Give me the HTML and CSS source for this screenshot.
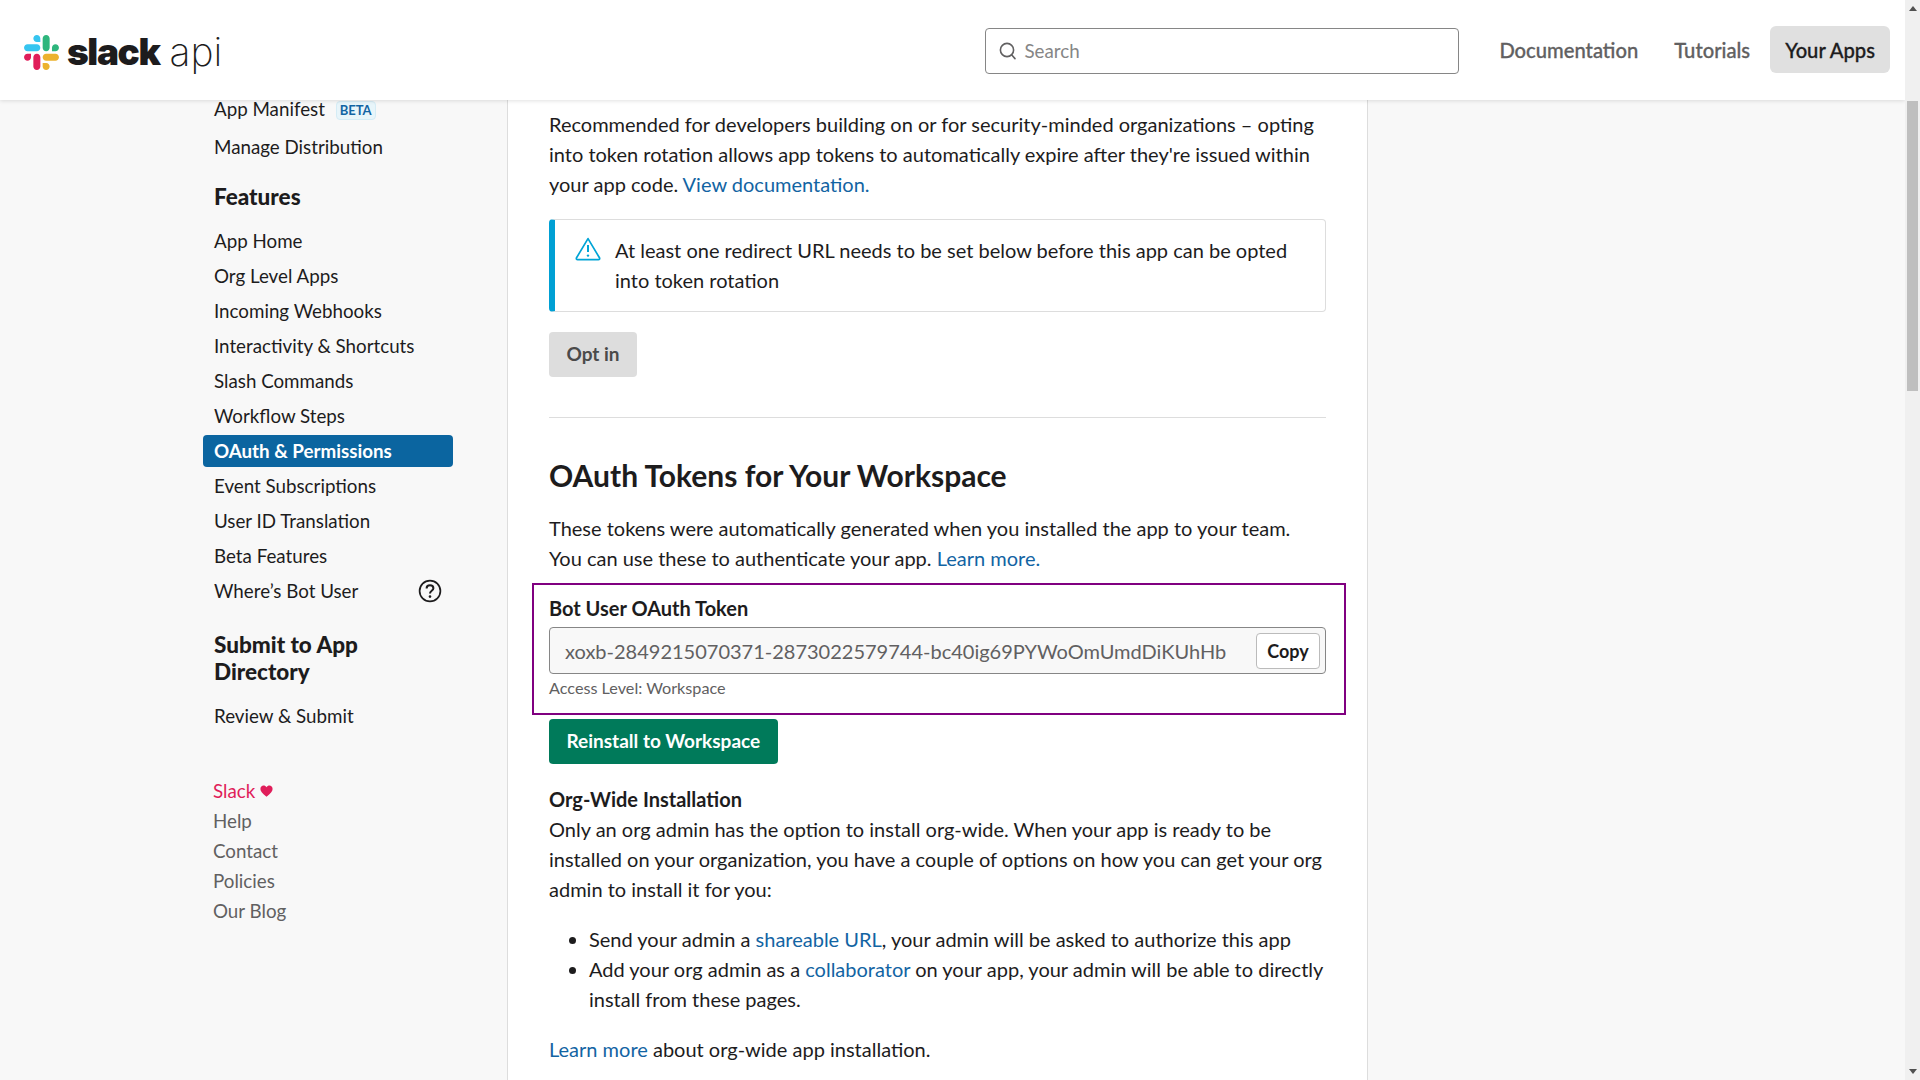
FILE: index.html
```html
<!DOCTYPE html>
<html lang="en">
<head>
    <meta charset="UTF-8" />
    <title>Slack API: OAuth &amp; Permissions</title>
    <link rel="stylesheet" href="styles.css">
</head>
<body>
    <div class="page">
        <header class="topbar">
            <a class="logo" href="#">
                <svg class="logo-mark" viewBox="0 0 2447.6 2452.5" aria-hidden="true">
                    <path d="m897.4 0c-135.3.1-244.8 109.9-244.7 245.2-.1 135.3 109.5 245.1 244.8 245.2h244.8v-245.1c.1-135.3-109.5-245.1-244.9-245.3.1 0 .1 0 0 0m0 654h-652.6c-135.3.1-244.9 109.9-244.8 245.2-.2 135.3 109.4 245.1 244.7 245.3h652.7c135.3-.1 244.9-109.9 244.8-245.2.1-135.4-109.5-245.2-244.8-245.3z" fill="#36c5f0"/>
                    <path d="m2447.6 899.2c.1-135.3-109.5-245.1-244.8-245.2-135.3.1-244.9 109.9-244.8 245.2v245.3h244.8c135.3-.1 244.9-109.9 244.8-245.3zm-652.7 0v-654c.1-135.2-109.4-245-244.7-245.2-135.3.1-244.9 109.9-244.8 245.2v654c-.2 135.3 109.4 245.1 244.7 245.3 135.3-.1 244.9-109.9 244.8-245.3z" fill="#2eb67d"/>
                    <path d="m1550.1 2452.5c135.3-.1 244.9-109.9 244.8-245.2.1-135.3-109.5-245.1-244.8-245.2h-244.8v245.2c-.1 135.2 109.5 245 244.8 245.2zm0-654.1h652.7c135.3-.1 244.9-109.9 244.8-245.2.2-135.3-109.4-245.1-244.7-245.3h-652.7c-135.3.1-244.9 109.9-244.8 245.2-.1 135.4 109.4 245.2 244.7 245.3z" fill="#ecb22e"/>
                    <path d="m0 1553.2c-.1 135.3 109.5 245.1 244.8 245.2 135.3-.1 244.9-109.9 244.8-245.2v-245.2h-244.8c-135.3.1-244.9 109.9-244.8 245.2zm652.7 0v654c-.2 135.3 109.4 245.1 244.7 245.3 135.3-.1 244.9-109.9 244.8-245.2v-653.9c.2-135.3-109.4-245.1-244.7-245.3-135.4 0-244.9 109.8-244.8 245.1 0 0 0 .1 0 .1z" fill="#e01e5a"/>
                </svg>
                <span class="logo-slack">slack</span>
                <span class="logo-api">api</span>
            </a>
            <div class="search">
                <svg class="search-icon" viewBox="0 0 20 20" aria-hidden="true">
                    <circle cx="9" cy="9" r="6.6" fill="none" stroke="#616061" stroke-width="1.6"/>
                    <path d="M13.6 13.8 L17 17.6" fill="none" stroke="#616061" stroke-width="1.6" stroke-linecap="round"/>
                </svg>
                <span class="search-text">Search</span>
            </div>
            <nav class="topnav">
                <a href="#">Documentation</a>
                <a href="#">Tutorials</a>
                <a href="#" class="topnav-active">Your Apps</a>
            </nav>
        </header>

        <div class="columns">
            <aside class="sidebar">
                <ul class="side-list side-list-top">
                    <li class="side-tall">App Manifest <span class="beta">BETA</span></li>
                    <li class="side-tall">Manage Distribution</li>
                </ul>
                <h3 class="side-title">Features</h3>
                <ul class="side-list">
                    <li>App Home</li>
                    <li>Org Level Apps</li>
                    <li>Incoming Webhooks</li>
                    <li>Interactivity &amp; Shortcuts</li>
                    <li>Slash Commands</li>
                    <li>Workflow Steps</li>
                    <li class="side-active">OAuth &amp; Permissions</li>
                    <li>Event Subscriptions</li>
                    <li>User ID Translation</li>
                    <li>Beta Features</li>
                    <li class="side-help">Where’s Bot User
                        <svg class="help-icon" viewBox="0 0 24 24" aria-hidden="true">
                            <circle cx="12" cy="12" r="10.4" fill="none" stroke="#1d1c1d" stroke-width="1.7"/>
                            <path d="M8.6 9.4c0-2 1.5-3.2 3.4-3.2s3.4 1.2 3.4 3c0 2.6-3.4 2.6-3.4 5.2" fill="none" stroke="#1d1c1d" stroke-width="2"/>
                            <circle cx="12" cy="17.6" r="1.3" fill="#1d1c1d"/>
                        </svg>
                    </li>
                </ul>
                <h3 class="side-title side-title-two">Submit to App Directory</h3>
                <ul class="side-list">
                    <li>Review &amp; Submit</li>
                </ul>
                <ul class="side-foot">
                    <li class="foot-love">Slack
                        <svg class="heart" viewBox="0 0 14 13" aria-hidden="true">
                            <path d="M7 12.6 C2.6 9 .4 7 .4 4.2 C.4 2 2 .6 3.8 .6 C5.1 .6 6.3 1.3 7 2.5 C7.7 1.3 8.9 .6 10.2 .6 C12 .6 13.6 2 13.6 4.2 C13.6 7 11.4 9 7 12.6 Z" fill="#e01e5a"/>
                        </svg>
                    </li>
                    <li>Help</li>
                    <li>Contact</li>
                    <li>Policies</li>
                    <li>Our Blog</li>
                </ul>
            </aside>

            <main class="content">
                <p>Recommended for developers building on or for security-minded organizations – opting into token rotation allows app tokens to automatically expire after they're issued within your app code. <a href="#">View documentation.</a></p>

                <div class="callout">
                    <svg class="callout-icon" viewBox="0 0 26 24" aria-hidden="true">
                        <path d="M13 1.6 L24.6 21 Q25 22.6 23.4 22.6 L2.6 22.6 Q1 22.6 1.4 21 Z" fill="none" stroke="#00a4d6" stroke-width="1.7" stroke-linejoin="round"/>
                        <path d="M13 8 V15" fill="none" stroke="#00a4d6" stroke-width="2"/>
                        <circle cx="13" cy="18.6" r="1.2" fill="#00a4d6"/>
                    </svg>
                    <span>At least one redirect URL needs to be set below before this app can be opted into token rotation</span>
                </div>

                <button class="btn btn-grey" type="button">Opt in</button>

                <hr class="divider">

                <h2 class="section-title">OAuth Tokens for Your Workspace</h2>
                <p>These tokens were automatically generated when you installed the app to your team. You can use these to authenticate your app. <a href="#">Learn more.</a></p>

                <div class="token-box">
                    <label class="token-label">Bot User OAuth Token</label>
                    <div class="token-field">
                        <span class="token-value">xoxb-2849215070371-2873022579744-bc40ig69PYWoOmUmdDiKUhHb</span>
                        <button class="copy-btn" type="button">Copy</button>
                    </div>
                    <div class="token-note">Access Level: Workspace</div>
                </div>

                <button class="btn btn-green" type="button">Reinstall to Workspace</button>

                <h4 class="org-title">Org-Wide Installation</h4>
                <p>Only an org admin has the option to install org-wide. When your app is ready to be installed on your organization, you have a couple of options on how you can get your org admin to install it for you:</p>
                <ul class="org-list">
                    <li>Send your admin a <a href="#">shareable URL</a>, your admin will be asked to authorize this app</li>
                    <li>Add your org admin as a <a href="#">collaborator</a> on your app, your admin will be able to directly install from these pages.</li>
                </ul>
                <p><a href="#">Learn more</a> about org-wide app installation.</p>
            </main>

            <div class="rightbar"></div>
        </div>
    </div>

    <div class="scrollbar">
        <span class="arrow arrow-up"></span>
        <span class="thumb"></span>
        <span class="arrow arrow-down"></span>
    </div>
</body>
</html>
```

FILE: styles.css
```css
* {
    margin: 0;
    padding: 0;
    box-sizing: border-box;
}

html, body {
    height: 100%;
    overflow: hidden;
}

body {
    display: flex;
    font-family: Lato, "Open Sans", sans-serif;
    font-size: 20px;
    line-height: 30px;
    color: #1d1c1d;
    background: #f8f8f8;
}

a {
    color: #1264a3;
    text-decoration: none;
}

ul {
    list-style: none;
}

.page {
    flex: 1;
    min-width: 0;
    height: 1080px;
    display: flex;
    flex-direction: column;
    overflow: hidden;
}

/* header */
.topbar {
    position: relative;
    z-index: 2;
    flex: none;
    height: 100px;
    display: flex;
    align-items: center;
    background: #fff;
    box-shadow: 0 1px 4px rgba(0, 0, 0, 0.12);
    padding: 0 15px 0 24px;
}

.logo {
    display: flex;
    align-items: center;
    color: #1d1c1d;
    margin-top: 4px;
}

.logo-mark {
    width: 35px;
    height: 35px;
    margin-right: 8px;
}

.logo-slack {
    font-family: Inter, sans-serif;
    font-size: 37px;
    line-height: 46px;
    font-weight: 900;
    letter-spacing: -1.4px;
    margin-right: 10px;
}

.logo-api {
    font-family: Inter, sans-serif;
    font-size: 39px;
    line-height: 46px;
    font-weight: 200;
}

.search {
    margin-left: auto;
    width: 474px;
    height: 46px;
    display: flex;
    align-items: center;
    gap: 6px;
    border: 1px solid #868686;
    border-radius: 4px;
    padding: 0 12px;
    color: #868686;
    font-size: 18.75px;
    margin-top: 1px;
}

.search-icon {
    width: 20px;
    height: 20px;
}

.topnav {
    display: flex;
    align-items: center;
    margin-left: 25px;
}

.topnav a {
    color: #616061;
    font-size: 20.2px;
    font-weight: 500;
    -webkit-text-stroke: 0.3px;
    padding: 0 15px;
    height: 47px;
    line-height: 49px;
    border-radius: 6px;
    margin-top: -1px;
}

.topnav a + a {
    margin-left: 6px;
}

.topnav .topnav-active {
    color: #1d1c1d;
    background: #e0e0e0;
    margin-left: 5px;
}

/* columns below the header */
.columns {
    flex: 1;
    min-height: 0;
    display: flex;
}

.sidebar {
    flex: none;
    width: 508px;
    border-right: 1px solid #dddddd;
    padding-left: 203px;
    font-size: 18.75px;
    overflow: hidden;
}

.side-list li {
    height: 35px;
    line-height: 35px;
    padding-left: 11px;
    width: 250px;
    border-radius: 4px;
}

.side-list-top {
    margin-top: -10px;
}

.side-list .side-tall {
    height: 38px;
    line-height: 38px;
}

.beta {
    display: inline-block;
    font-size: 13px;
    line-height: 17px;
    font-weight: 700;
    color: #1264a3;
    background: #e8f5fa;
    border: 1px solid #d5ecf5;
    border-radius: 4px;
    padding: 0 3px;
    margin-left: 6px;
    vertical-align: 1px;
}

.side-title {
    font-size: 22.5px;
    line-height: 27px;
    font-weight: 900;
    padding-left: 11px;
    width: 250px;
    margin: 17px 0 13px;
}

.side-title-two {
    margin: 23px 0 13px;
}

.side-list .side-active {
    background: #0b65a0;
    color: #fff;
    font-weight: 700;
    height: 32px;
    line-height: 32px;
    margin: 2px 0 1px;
}

.side-help {
    display: flex;
    align-items: center;
    justify-content: space-between;
    padding-right: 11px;
}

.help-icon {
    width: 24px;
    height: 24px;
}

.side-foot {
    margin-top: 43px;
    padding-left: 10px;
    color: #616061;
}

.foot-love {
    color: #e01e5a;
    display: flex;
    align-items: center;
    gap: 5px;
}

.heart {
    width: 13px;
    height: 12px;
}

/* main column */
.content {
    flex: none;
    width: 860px;
    background: #fff;
    padding: 9px 41px 0 41px;
    border-right: 1px solid #dddddd;
    overflow: hidden;
}

.callout {
    margin-top: 20px;
    min-height: 93px;
    display: flex;
    gap: 14px;
    border: 1px solid #dddddd;
    border-left: 6px solid #00a0d4;
    border-radius: 4px;
    padding: 15px 20px 15px 20px;
}

.callout-icon {
    flex: none;
    width: 26px;
    height: 24px;
    margin-top: 2px;
}

.btn {
    display: block;
    font-family: inherit;
    font-size: 19px;
    font-weight: 700;
    height: 45px;
    padding: 0 17.5px 2px;
    border: none;
    border-radius: 4px;
}

.btn-grey {
    margin-top: 20px;
    background: #dddddd;
    color: #4a4a4a;
}

.btn-green {
    margin-top: 4px;
    background: #007a5a;
    color: #fff;
}

.divider {
    margin-top: 40px;
    border: none;
    border-top: 1px solid #dddddd;
}

.section-title {
    font-size: 30px;
    line-height: 40px;
    font-weight: 700;
    margin: 37px 0 18px;
}

.token-box {
    margin: 10px -20px 0 -17px;
    height: 132px;
    border: 2px solid #800080;
    padding: 8px 18px 0 15px;
}

.token-label {
    display: block;
    font-weight: 700;
    line-height: 30px;
}

.token-field {
    margin-top: 4px;
    height: 47px;
    display: flex;
    align-items: center;
    justify-content: space-between;
    background: #f8f8f8;
    border: 1px solid #868686;
    border-radius: 4px;
    padding: 0 5px 0 15px;
    color: #616061;
}

.token-value {
    white-space: nowrap;
}

.copy-btn {
    width: 64px;
    height: 36px;
    font-family: inherit;
    font-size: 18px;
    font-weight: 700;
    color: #1d1c1d;
    background: #fff;
    border: 1px solid #bbbbbb;
    border-radius: 4px;
}

.token-note {
    font-size: 16.2px;
    line-height: 24px;
    color: #616061;
    margin-top: 2px;
}

.org-title {
    font-size: 20px;
    line-height: 30px;
    font-weight: 700;
    margin-top: 20px;
}

.org-list {
    list-style: disc;
    margin: 20px 0 20px 40px;
}

/* browser scrollbar */
.scrollbar {
    flex: none;
    width: 15px;
    height: 1080px;
    display: flex;
    flex-direction: column;
    align-items: center;
    background: #f0f0f0;
}

.thumb {
    width: 11px;
    height: 290px;
    margin-top: 90px;
    background: #bfbfbf;
}

.arrow {
    width: 0;
    height: 0;
    border-left: 4px solid transparent;
    border-right: 4px solid transparent;
}

.arrow-up {
    margin-top: 6px;
    border-bottom: 5px solid #505050;
}

.arrow-down {
    margin-top: auto;
    margin-bottom: 6px;
    border-top: 5px solid #505050;
}
```
